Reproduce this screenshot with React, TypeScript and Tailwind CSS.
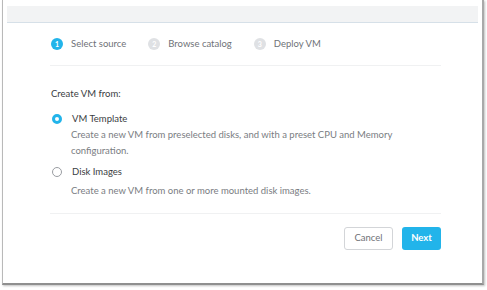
import React from "react";

function Step({ n, label, active }: { n: number; label: string; active?: boolean }) {
  return (
    <div className="flex items-center gap-[8px]">
      <div
        className={
          "w-[12px] h-[12px] rounded-full flex items-center justify-center text-[7px] font-bold text-white " +
          (active ? "bg-[#22b4ea]" : "bg-[#dfe1e4]")
        }
      >
        {n}
      </div>
      <span className="text-[9.5px] text-[#6f7277]">{label}</span>
    </div>
  );
}

export default function App() {
  return (
    <div className="w-[487px] h-[290px] bg-white" style={{ fontFamily: "Lato, 'Open Sans', sans-serif" }}>
      <div className="ml-[2px] w-[482px] h-[285px] bg-white border-l border-[#b9b9b9] border-r-[2px] border-r-[#a9a9a9] border-b-[2px] border-b-[#8f8f8f] shadow-[1px_1px_2px_rgba(0,0,0,0.25)] pt-[6px] flex flex-col">
        <div className="mx-[4px] h-[17px] bg-[#f2f3f4] border-b border-[#d6e0e8]" />
        <div className="pl-[47px] pr-[41px] flex flex-col">
          <div className="flex items-center gap-[22px] pl-[1px] h-[43px] border-b border-[#f0f1f2]">
            <Step n={1} label="Select source" active />
            <Step n={2} label="Browse catalog" />
            <Step n={3} label="Deploy VM" />
          </div>
          <div className="pt-[21px] pl-[1px] text-[9.5px] text-[#3a3d42]">Create VM from:</div>
          <div className="mt-[11px] flex items-center gap-[10px]">
            <div className="w-[10px] h-[10px] rounded-full border-[3px] border-[#22b4ea] bg-white ml-[2px]" />
            <span className="text-[9.5px] text-[#3a3d42]">VM Template</span>
          </div>
          <div className="ml-[21px] mt-0 text-[9.5px] leading-[16px] text-[#7a7d82]">
            Create a new VM from preselected disks, and with a preset CPU and Memory
            <br />
            configuration.
          </div>
          <div className="mt-[6px] flex items-center gap-[10px]">
            <div className="w-[10px] h-[10px] rounded-full border border-[#9a9da2] bg-white ml-[2px]" />
            <span className="text-[9.5px] text-[#3a3d42]">Disk Images</span>
          </div>
          <div className="ml-[21px] mt-[4px] text-[9.5px] leading-[16px] text-[#7a7d82]">
            Create a new VM from one or more mounted disk images.
          </div>
          <div className="mt-[14px] border-b border-[#f0f1f2]" />
          <div className="mt-[13px] flex justify-end gap-[9px]">
            <button className="w-[49px] h-[23px] rounded-[3px] border border-[#d3d5d8] bg-white text-[9.5px] text-[#6f7277]">
              Cancel
            </button>
            <button className="w-[39px] h-[23px] rounded-[3px] bg-[#22b4ea] text-[9.5px] font-bold text-white">
              Next
            </button>
          </div>
        </div>
      </div>
    </div>
  );
}
